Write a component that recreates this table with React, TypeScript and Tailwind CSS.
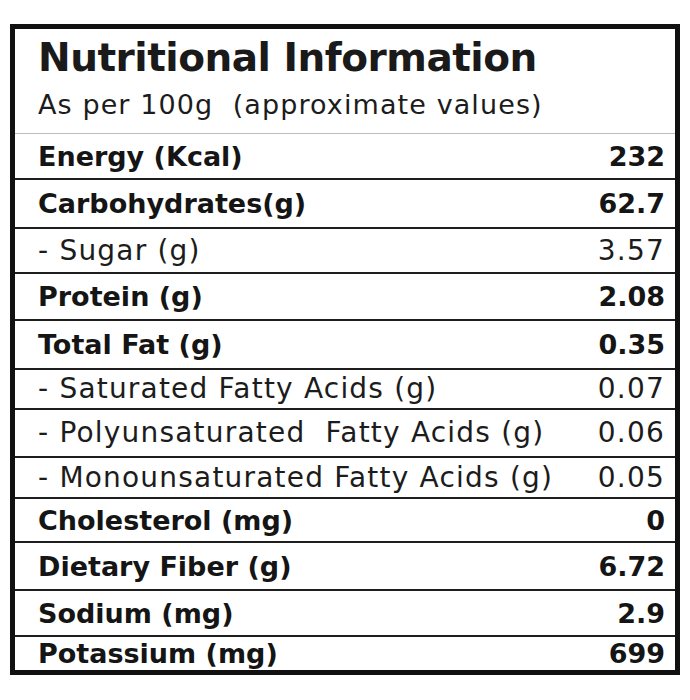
import React from "react";

type Row = { label: string; value: string; h: string; bold: boolean };

const rows: Row[] = [
  { label: "Energy (Kcal)", value: "232", h: "h-[45px]", bold: true },
  { label: "Carbohydrates(g)", value: "62.7", h: "h-[49px]", bold: true },
  { label: "- Sugar (g)", value: "3.57", h: "h-[45px]", bold: false },
  { label: "Protein (g)", value: "2.08", h: "h-[47px]", bold: true },
  { label: "Total Fat (g)", value: "0.35", h: "h-[49px]", bold: true },
  { label: "- Saturated Fatty Acids (g)", value: "0.07", h: "h-[40px]", bold: false },
  { label: "- Polyunsaturated\u00a0 Fatty Acids (g)", value: "0.06", h: "h-[48px]", bold: false },
  { label: "- Monounsaturated Fatty Acids (g)", value: "0.05", h: "h-[41px]", bold: false },
  { label: "Cholesterol (mg)", value: "0", h: "h-[44px]", bold: true },
  { label: "Dietary Fiber (g)", value: "6.72", h: "h-[48px]", bold: true },
  { label: "Sodium (mg)", value: "2.9", h: "h-[46px]", bold: true },
  { label: "Potassium (mg)", value: "699", h: "h-[35px]", bold: true },
];

function NutritionRow({ row, first }: { row: Row; first: boolean }) {
  return (
    <div
      className={`${row.h} flex items-center justify-between pl-[23px] pr-[10px] ${
        first ? "border-t border-[#bdbdbd]" : "border-t-2 border-[#1e1e1e]"
      } ${
        row.bold
          ? "font-bold text-[27px] tracking-[0px] text-[#151515]"
          : "font-normal text-[28px] tracking-[1.2px] text-[#1c1c1c]"
      }`}
    >
      <span className="leading-none whitespace-pre">{row.label}</span>
      <span className="leading-none">{row.value}</span>
    </div>
  );
}

export default function App() {
  return (
    <div className="w-[690px] h-[700px] bg-white pt-[24px] pl-[10px] font-['DejaVu_Sans',sans-serif]">
      <div className="w-[670px] border-[5px] border-[#111] flex flex-col">
        <div className="h-[104px] pl-[23px] pt-[9px] flex flex-col">
          <h1 className="text-[39px] leading-[39px] tracking-[-0.5px] font-bold text-[#1a1a1a]">
            Nutritional Information
          </h1>
          <p className="text-[27px] leading-[27px] tracking-[1.1px] mt-[14px] text-[#1c1c1c] whitespace-pre">
            As per 100g  (approximate values)
          </p>
        </div>
        {rows.map((row, i) => (
          <NutritionRow key={row.label} row={row} first={i === 0} />
        ))}
      </div>
    </div>
  );
}
